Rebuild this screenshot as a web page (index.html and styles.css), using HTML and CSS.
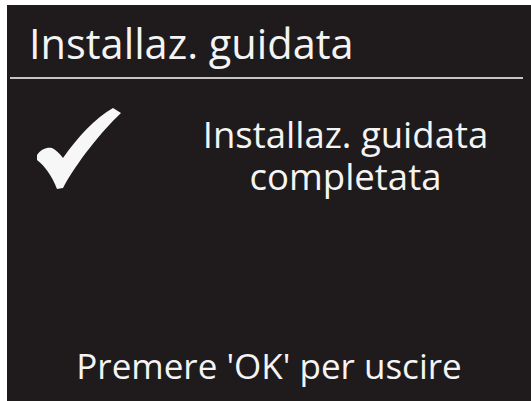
FILE: index.html
```html
<!DOCTYPE html>
<html lang="it">
<head>
<meta charset="utf-8">
<title>Installaz. guidata</title>
<link rel="stylesheet" href="styles.css">
</head>
<body>
<div class="screen">
  <div class="header">Installaz. guidata</div>
  <div class="rule"></div>
  <div class="content">
    <svg class="check" viewBox="0 0 84 82" width="84" height="82" aria-hidden="true">
      <path d="M0 47 C4 41 10 39 15 40 C19 42 23 46 26 50 C40 30 58 10 76 0 L84 5 C64 24 40 54 26 80 L20 81 C15 68 8 58 0 52 Z" fill="#f7f7f7"/>
    </svg>
    <div class="message">
      <div class="line">Installaz. guidata</div>
      <div class="line">completata</div>
    </div>
  </div>
  <div class="footer">Premere 'OK' per uscire</div>
</div>
</body>
</html>
```

FILE: styles.css
```css
html, body {
  margin: 0;
  padding: 0;
  background: #ffffff;
}
body {
  width: 531px;
  height: 401px;
  overflow: hidden;
  font-family: "Open Sans", "DejaVu Sans", sans-serif;
  font-weight: 500;
  color: #f4f4f4;
}
.screen {
  margin: 5px 0 0 7px;
  width: 524px;
  height: 396px;
  background: #1f1b1c;
  display: flex;
  flex-direction: column;
}
.header {
  font-size: 41.5px;
  line-height: 48px;
  padding: 14px 0 0 22px;
  white-space: nowrap;
}
.rule {
  height: 2px;
  background: #c4c4c4;
  margin: 10px 8px 0 3px;
}
.content {
  display: flex;
  align-items: flex-start;
  padding: 29px 0 0 30px;
}
.check {
  display: block;
  flex: none;
}
.message {
  flex: 1;
  margin: 5px 0 0 39px;
  text-align: center;
  font-size: 36.5px;
  white-space: nowrap;
}
.line {
  line-height: 42px;
  height: 42px;
}
.footer {
  margin-top: auto;
  padding-bottom: 14px;
  text-align: center;
  font-size: 35px;
  line-height: 42px;
  white-space: nowrap;
}
```
